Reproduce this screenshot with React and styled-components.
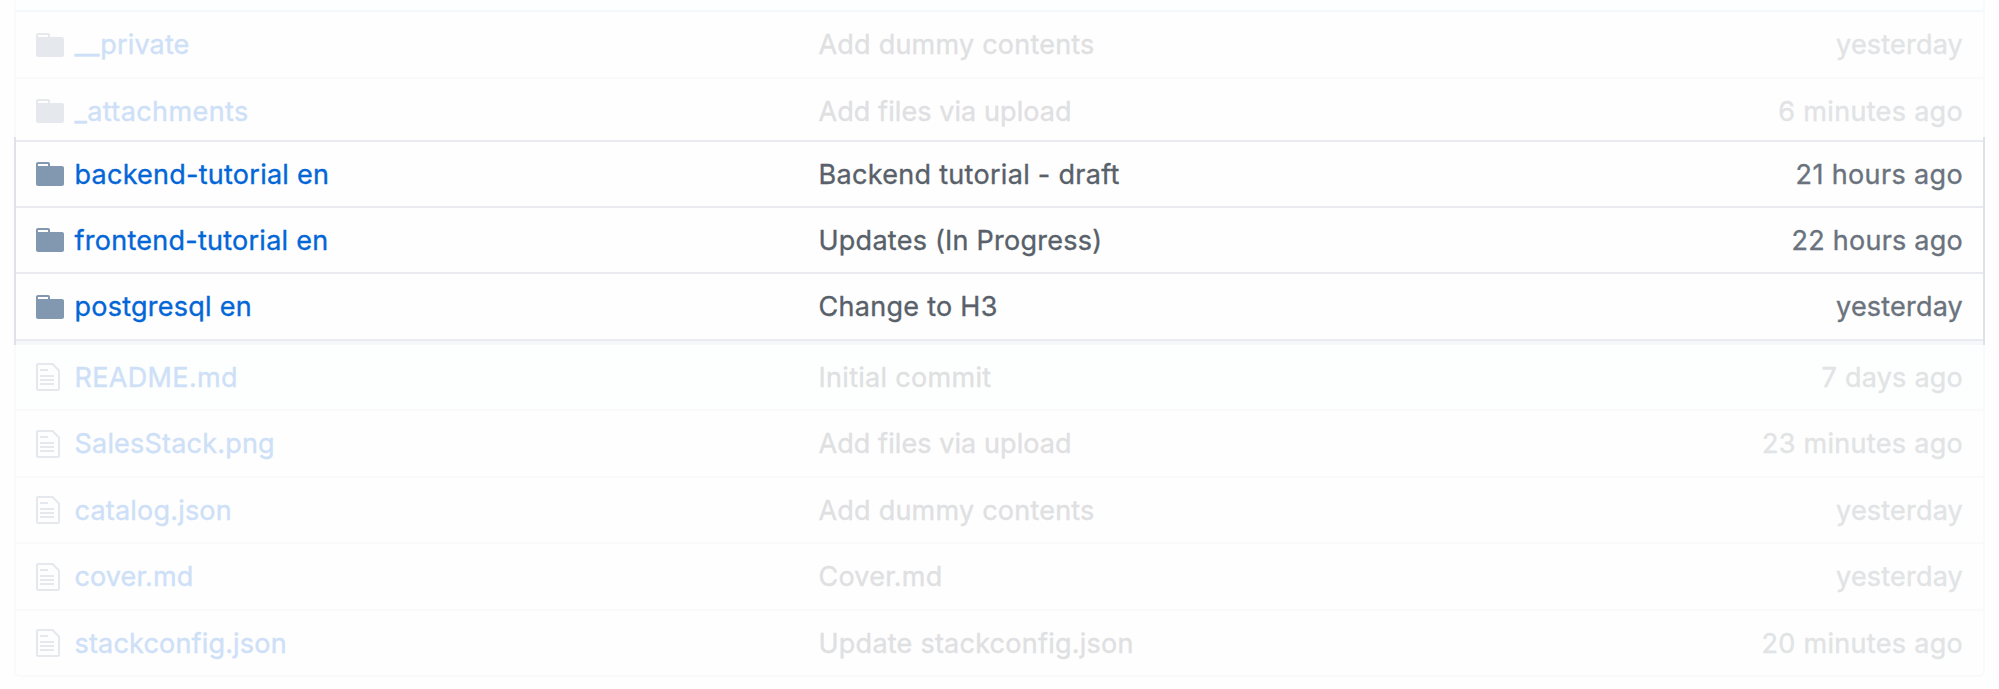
import React from "react";
import styled, { createGlobalStyle } from "styled-components";

const GlobalStyle = createGlobalStyle`
  * { box-sizing: border-box; }
  body { margin: 0; background: #fefefe; }
`;

const palette = {
  faded: { link: "#cde0f7", message: "#dee0e2", age: "#e1e3e5", icon: "#e5e9ee", line: "#fafafb", side: "#f9fafb" },
  active: { link: "#0366d6", message: "#586069", age: "#6a737d", icon: "#8297b0", line: "#e9ebf0", side: "#dfe2e6" },
};

const Page = styled.main`
  padding: 1px 14px 0;
  width: 1999px;
  height: 689px;
  overflow: hidden;
  font-family: Inter, "Liberation Sans", sans-serif;
  font-size: 27px;
  line-height: 32px;
`;

const Group = styled.section`
  width: 1971px;
  border: 0 solid ${(p) => palette[p.$tone].side};
  border-width: 0 2px ${(p) => (p.$last ? "2px" : "0")};
  border-radius: ${(p) => (p.$last ? "0 0 6px 6px" : "0")};
`;

const CommitBar = styled.div`
  height: 11px;
  background: #fcfeff;
  border-bottom: 2px solid #f3f8fd;
`;

const TopEdge = styled.div`
  height: 5px;
  border-bottom: 2px solid ${palette.active.line};
`;

const BottomShade = styled.div`
  height: 4px;
  background: #f6f7fa;
`;

const Row = styled.div`
  display: grid;
  grid-template-columns: 38.5px 744px 1fr auto;
  align-items: center;
  box-sizing: content-box;
  height: ${(p) => p.$height}px;
  padding: 0 20px;
  background: ${(p) => (p.$tinted ? "#fdfffe" : "transparent")};
  border-bottom: ${(p) => (p.$line ? `2px solid ${palette[p.$tone].line}` : "0")};
`;

const ClippedRow = styled.div`
  height: 58px;
  overflow: hidden;
`;

const Text = styled.span`
  padding-top: 1px;
  white-space: nowrap;
  letter-spacing: ${(p) => p.$tracking}px;
  color: ${(p) => palette[p.$tone][p.$kind]};
  -webkit-text-stroke: 0.35px currentColor;
`;

const Icon = styled.svg`
  display: block;
  fill: ${(p) => palette[p.$tone].icon};
`;

const FolderIcon = ({ tone }) => (
  <Icon $tone={tone} width="28" height="32" viewBox="0 0 14 16">
    <path fillRule="evenodd" d="M13 4H7V3c0-.66-.31-1-1-1H1c-.55 0-1 .45-1 1v10c0 .55.45 1 1 1h12c.55 0 1-.45 1-1V5c0-.55-.45-1-1-1zM6 4H1V3h5v1z" />
  </Icon>
);

const FileIcon = ({ tone }) => (
  <Icon $tone={tone} width="24" height="32" viewBox="0 0 12 16">
    <path fillRule="evenodd" d="M6 5H2V4h4v1zM2 8h7V7H2v1zm0 2h7V9H2v1zm0 2h7v-1H2v1zm10-7.5V14c0 .55-.45 1-1 1H1c-.55 0-1-.45-1-1V2c0-.55.45-1 1-1h7.5L12 4.5zM11 5L8 2H1v12h10V5z" />
  </Icon>
);

// Each cell is [text, letter spacing in px].
function FileRow({ tone = "faded", folder, name, message, age, height, line = true, tinted }) {
  return (
    <Row $tone={tone} $height={height} $line={line} $tinted={tinted}>
      {folder ? <FolderIcon tone={tone} /> : <FileIcon tone={tone} />}
      <Text $tone={tone} $kind="link" $tracking={name[1]}>{name[0]}</Text>
      <Text $tone={tone} $kind="message" $tracking={message[1]}>{message[0]}</Text>
      <Text $tone={tone} $kind="age" $tracking={age[1]}>{age[0]}</Text>
    </Row>
  );
}

const tutorials = [
  { name: ["backend-tutorial en", 0.25], message: ["Backend tutorial - draft", 0.3], age: ["21 hours ago", 0.36], height: 64 },
  { name: ["frontend-tutorial en", 0.26], message: ["Updates (In Progress)", 0.25], age: ["22 hours ago", 0.24], height: 64 },
  { name: ["postgresql en", 0.25], message: ["Change to H3", 0.28], age: ["yesterday", 0.2], height: 65 },
];

const files = [
  { name: ["README.md", 0.35], message: ["Initial commit", 0.3], age: ["7 days ago", 0.23], height: 64, tinted: true },
  { name: ["SalesStack.png", 0.2], message: ["Add files via upload", 0.08], age: ["23 minutes ago", 0.3], height: 65 },
  { name: ["catalog.json", 0.2], message: ["Add dummy contents", 0.22], age: ["yesterday", 0.2], height: 64 },
  { name: ["cover.md", 0.12], message: ["Cover.md", 0.22], age: ["yesterday", 0.2], height: 65 },
  { name: ["stackconfig.json", 0.18], message: ["Update stackconfig.json", 0.24], age: ["20 minutes ago", 0.3], height: 64, line: false },
];

export default function App() {
  return (
    <>
      <GlobalStyle />
      <Page>
        <Group $tone="faded">
          <CommitBar />
          <FileRow folder name={["__private", 0.14]} message={["Add dummy contents", 0.22]} age={["yesterday", 0.2]} height={65} />
          <ClippedRow>
            <FileRow folder name={["_attachments", 0.4]} message={["Add files via upload", 0.08]} age={["6 minutes ago", 0.32]} height={64} line={false} />
          </ClippedRow>
        </Group>
        <Group $tone="active">
          <TopEdge />
          {tutorials.map((row) => (
            <FileRow key={row.name[0]} folder tone="active" {...row} />
          ))}
          <BottomShade />
        </Group>
        <Group $tone="faded" $last>
          {files.map((row) => (
            <FileRow key={row.name[0]} {...row} />
          ))}
        </Group>
      </Page>
    </>
  );
}
